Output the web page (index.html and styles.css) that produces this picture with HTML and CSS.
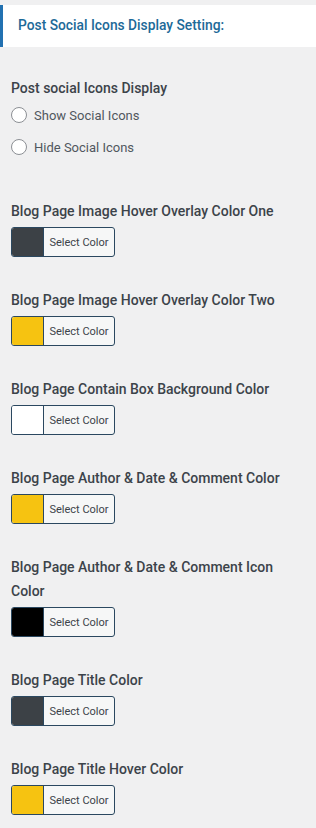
FILE: index.html
```html
<!DOCTYPE html>
<html>
<head>
<meta charset="utf-8">
<link rel="stylesheet" href="styles.css">
</head>
<body>
<div class="header"><h2>Post Social Icons Display Setting:</h2></div>
<div class="content">
  <div class="group radios">
    <div class="label">Post social Icons Display</div>
    <label class="radio"><span class="circle"></span>Show Social Icons</label>
    <label class="radio"><span class="circle"></span>Hide Social Icons</label>
  </div>
  <div class="group">
    <div class="label">Blog Page Image Hover Overlay Color One</div>
    <div class="picker"><span class="swatch dark"></span><span class="txt">Select Color</span></div>
  </div>
  <div class="group">
    <div class="label">Blog Page Image Hover Overlay Color Two</div>
    <div class="picker"><span class="swatch yellow"></span><span class="txt">Select Color</span></div>
  </div>
  <div class="group">
    <div class="label">Blog Page Contain Box Background Color</div>
    <div class="picker"><span class="swatch white"></span><span class="txt">Select Color</span></div>
  </div>
  <div class="group">
    <div class="label">Blog Page Author &amp; Date &amp; Comment Color</div>
    <div class="picker"><span class="swatch yellow"></span><span class="txt">Select Color</span></div>
  </div>
  <div class="group">
    <div class="label">Blog Page Author &amp; Date &amp; Comment Icon Color</div>
    <div class="picker"><span class="swatch black"></span><span class="txt">Select Color</span></div>
  </div>
  <div class="group">
    <div class="label">Blog Page Title Color</div>
    <div class="picker"><span class="swatch dark"></span><span class="txt">Select Color</span></div>
  </div>
  <div class="group">
    <div class="label">Blog Page Title Hover Color</div>
    <div class="picker"><span class="swatch yellow"></span><span class="txt">Select Color</span></div>
  </div>
</div>
</body>
</html>
```
FILE: styles.css
```css
html, body {
  margin: 0;
  padding: 0;
  background: #f0f0f1;
  font-family: Roboto, "Liberation Sans", sans-serif;
}
body {
  padding-top: 5px;
}
.header {
  background: #fff;
  border-left: 3px solid #2271b1;
  height: 42px;
  display: flex;
  align-items: center;
  padding-left: 15px;
}
.header h2 {
  margin: 0;
  font-size: 13.8px;
  font-weight: 500;
  color: #1d6a98;
  position: relative;
  top: -1px;
}
.content {
  padding: 29px 12px 0 11px;
  display: flex;
  flex-direction: column;
  gap: 31px;
}
.radios {
  display: flex;
  flex-direction: column;
  margin-bottom: 5px;
}
.label {
  font-size: 14px;
  font-weight: 500;
  color: #3c434a;
  line-height: 24px;
}
.radios .label {
  margin-bottom: -1px;
}
.radio {
  display: flex;
  align-items: center;
  gap: 7px;
  font-size: 13px;
  color: #50575e;
  height: 32px;
}
.circle {
  width: 14px;
  height: 14px;
  border: 1px solid #8c8f94;
  border-radius: 50%;
  background: #fff;
  flex: none;
}
.picker {
  margin-top: 4px;
  width: 102px;
  height: 28px;
  border: 1px solid #2b4860;
  border-radius: 3px;
  display: flex;
  overflow: hidden;
  background: #f6f7f7;
}
.swatch {
  width: 31px;
  flex: none;
  border-right: 1px solid #2b4860;
}
.swatch.dark { background: #3c4146; }
.swatch.yellow { background: #f6c311; }
.swatch.white { background: #ffffff; }
.swatch.black { background: #000000; }
.txt {
  flex: 1;
  display: flex;
  align-items: center;
  justify-content: center;
  font-size: 11px;
  color: #3c434a;
}
```
